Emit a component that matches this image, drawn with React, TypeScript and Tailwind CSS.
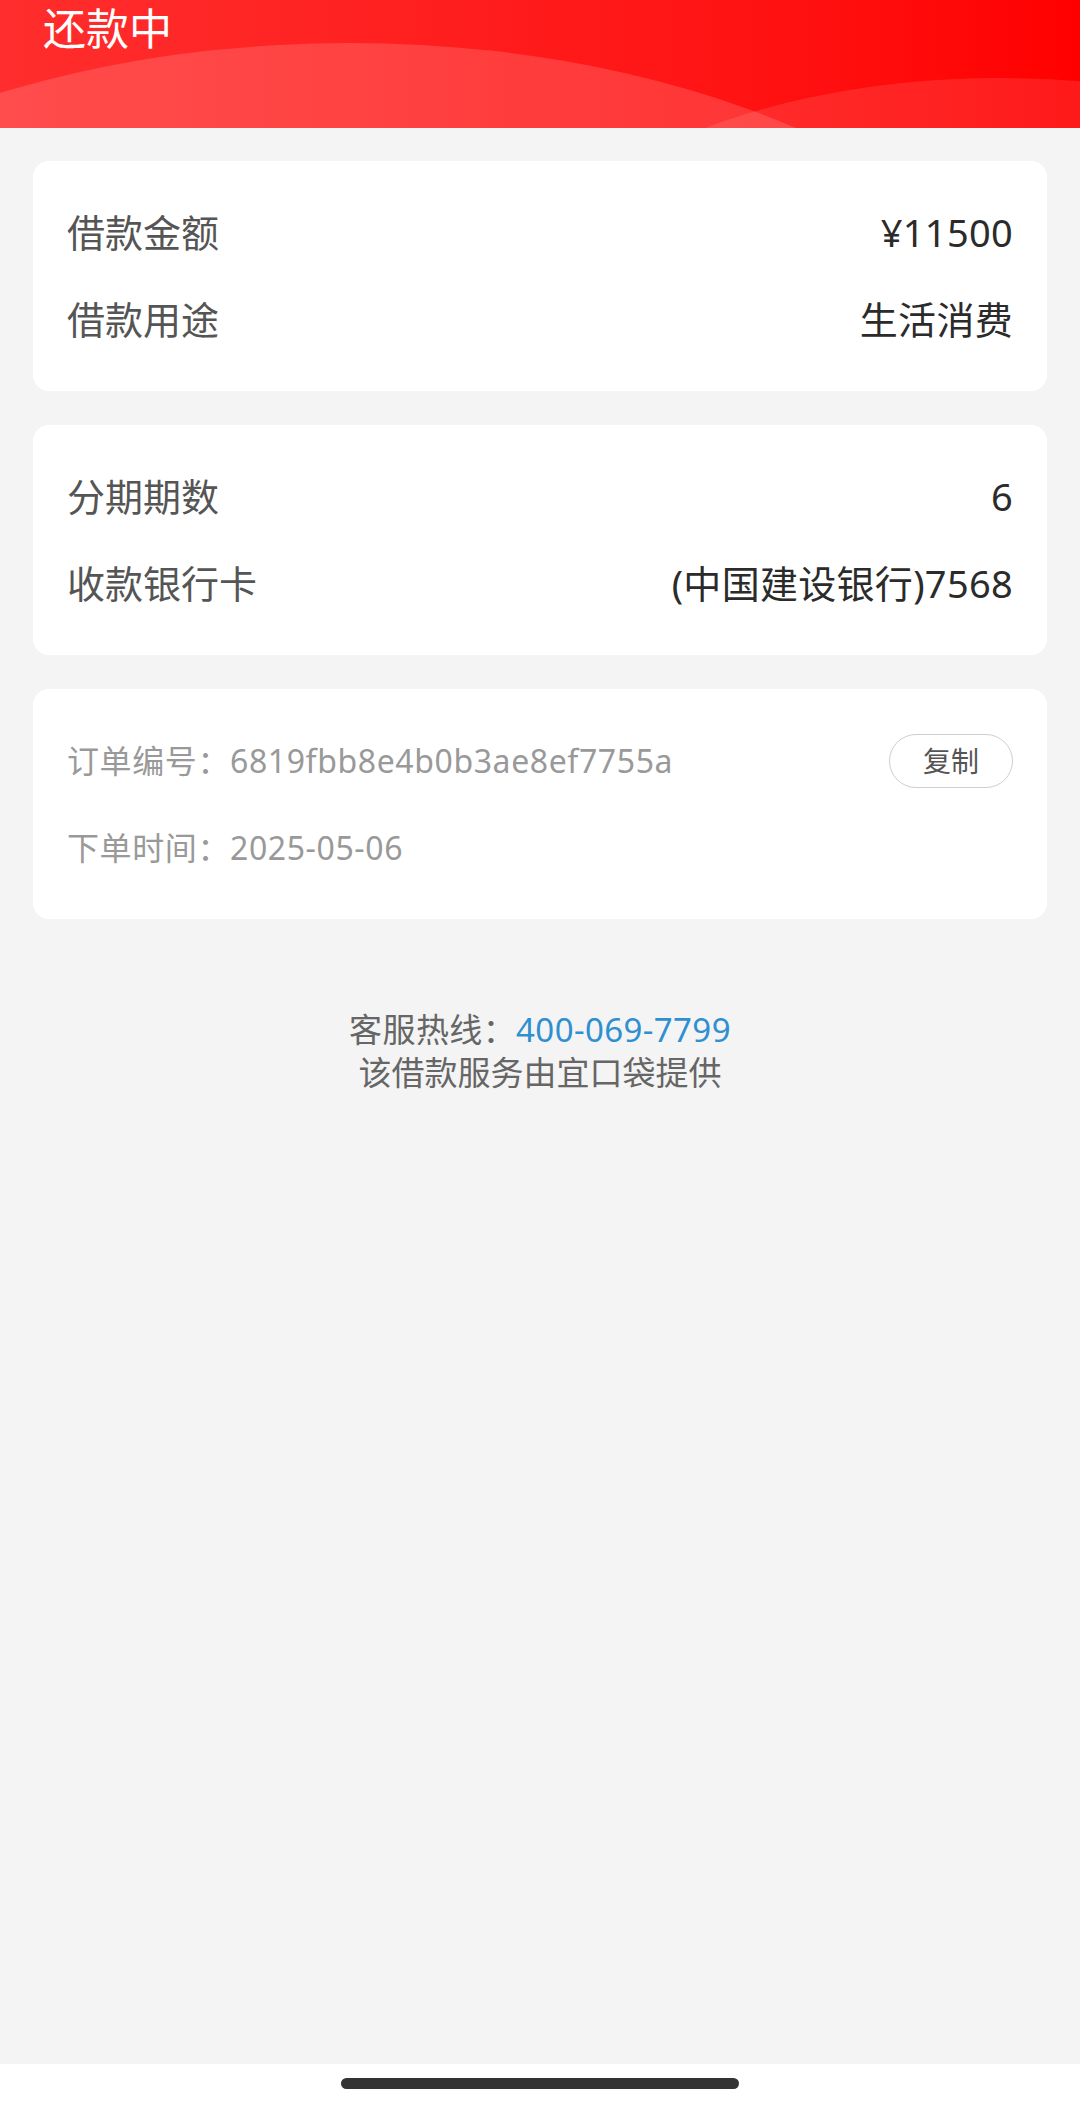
import React from 'react';

const rows1 = [
  { label: '借款金额', value: '¥11500' },
  { label: '借款用途', value: '生活消费' },
];

const rows2 = [
  { label: '分期期数', value: '6' },
  { label: '收款银行卡', value: '(中国建设银行)7568' },
];

function InfoCard({ rows }: { rows: { label: string; value: string }[] }) {
  return (
    <div className="bg-white rounded-[16px] px-[34px] py-[28px]">
      {rows.map((r) => (
        <div key={r.label} className="h-[87px] flex items-center justify-between">
          <span className="text-[38px] text-[#555]">{r.label}</span>
          <span className="text-[38px] text-[#2b2b2b] tracking-[0.3px]">{r.value}</span>
        </div>
      ))}
    </div>
  );
}

export default function App() {
  return (
    <div
      className="w-[1080px] h-[2109px] bg-[#f4f4f4] flex flex-col"
      style={{ fontFamily: '"Noto Sans", "Noto Sans CJK SC", sans-serif' }}
    >
      <header className="relative h-[128px] overflow-hidden bg-gradient-to-r from-[#ff2d2d] via-[#ff1a1a] to-[#ff0000] shrink-0">
        <div className="absolute left-[-370px] top-[43px] w-[1440px] h-[792px] rounded-[50%] bg-white/15" />
        <div className="absolute left-[500px] top-[78px] w-[1000px] h-[520px] rounded-[50%] bg-white/10" />
        <h1 className="relative pl-[43px] pt-[1px] text-[43px] leading-[56px] text-white">还款中</h1>
      </header>

      <main className="flex-1 px-[33px] pt-[33px] flex flex-col gap-[34px]">
        <InfoCard rows={rows1} />
        <InfoCard rows={rows2} />

        <div className="bg-white rounded-[16px] px-[34px] py-[28px]">
          <div className="h-[87px] flex items-center justify-between">
            <span className="text-[32px] text-[#999] tracking-[0.6px]">订单编号：6819fbb8e4b0b3ae8ef7755a</span>
            <button className="w-[124px] h-[54px] rounded-full border border-[#cfcfcf] text-[28px] text-[#555] flex items-center justify-center">
              复制
            </button>
          </div>
          <div className="h-[87px] flex items-center">
            <span className="text-[32px] text-[#999] tracking-[0.6px]">下单时间：2025-05-06</span>
          </div>
        </div>

        <div className="mt-[55px] flex flex-col items-center text-[33px] leading-[43px] text-[#666]">
          <p className="tracking-[0.4px]">
            客服热线：<span className="text-[#2f8fd0]">400-069-7799</span>
          </p>
          <p>该借款服务由宜口袋提供</p>
        </div>
      </main>

      <div className="h-[45px] bg-white flex justify-center shrink-0">
        <div className="mt-[14px] w-[398px] h-[11px] rounded-full bg-[#333]" />
      </div>
    </div>
  );
}
